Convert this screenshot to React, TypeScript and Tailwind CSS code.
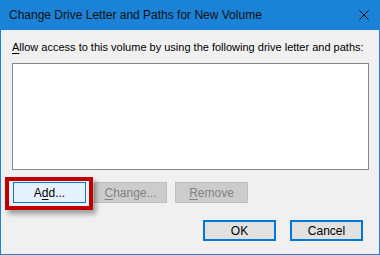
import React from 'react'

function Btn({
  label,
  hotkey,
  variant,
}: {
  label: string
  hotkey?: number
  variant: 'focus' | 'disabled' | 'default'
}) {
  const styles = {
    focus: 'bg-[#e5f1fb] border border-[#0078d7] text-black',
    disabled: 'bg-[#cccccc] border border-[#bfbfbf] text-[#838383]',
    default: 'bg-[#e1e1e1] border-2 border-[#0078d7] text-black',
  }
  return (
    <div
      className={`w-[73px] h-[21px] flex items-center justify-center text-[12px] leading-none ${styles[variant]}`}
    >
      {hotkey === undefined ? (
        <span>{label}</span>
      ) : (
        <span>
          {label.slice(0, hotkey)}
          <span className="underline underline-offset-2">{label[hotkey]}</span>
          {label.slice(hotkey + 1)}
        </span>
      )}
    </div>
  )
}

export default function App() {
  return (
    <div
      className="w-[380px] h-[255px] flex flex-col bg-[#f0f0f0] overflow-hidden"
      style={{ fontFamily: '"Liberation Sans", Arial, sans-serif' }}
    >
      {/* Title bar */}
      <div className="h-[30px] bg-[#1a82d7] flex items-center pl-[9px] pr-[11px] shrink-0">
        <span className="text-[12px] text-[#111] flex-1">
          Change Drive Letter and Paths for New Volume
        </span>
        <svg width="10" height="10" viewBox="0 0 10 10">
          <path d="M0.5 0.5 L9.5 9.5 M9.5 0.5 L0.5 9.5" stroke="#000" strokeWidth="1" />
        </svg>
      </div>

      {/* Body */}
      <div className="relative flex-1 border-x border-b border-[#1a82d7] pl-[11px] pr-[10px] pt-[11px]">
        <p className="text-[11px] leading-[13px] text-black">
          <span className="underline underline-offset-2">A</span>llow access to this volume by using the
          following drive letter and paths:
        </p>

        <div className="mt-[9px] h-[107px] bg-white border border-[#828790]" />

        <div className="mt-[12px] flex gap-[8px] pl-[1px]">
          <Btn label="Add..." hotkey={1} variant="focus" />
          <Btn label="Change..." hotkey={0} variant="disabled" />
          <Btn label="Remove" hotkey={0} variant="disabled" />
        </div>

        <div className="mt-[17px] flex justify-end gap-[14px] pr-[6px]">
          <Btn label="OK" variant="default" />
          <Btn label="Cancel" variant="default" />
        </div>

        {/* Red highlight around Add */}
        <div className="absolute left-[4px] top-[147px] w-[88px] h-[33px] border-[4px] border-[#c00000] shadow-[3px_4px_5px_rgba(0,0,0,0.35)]" />
      </div>
    </div>
  )
}
